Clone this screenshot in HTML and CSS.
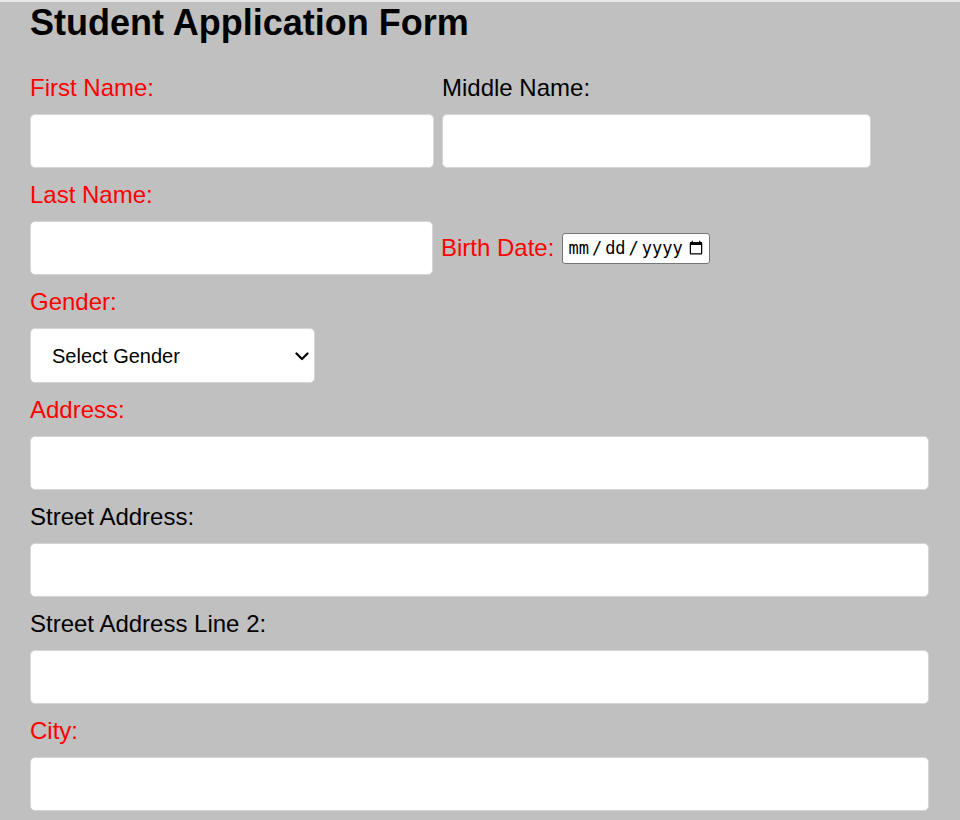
FILE: index.html
```html
<!DOCTYPE html>
<html lang="en">
<head>
<meta charset="utf-8">
<title>Student Application Form</title>
<link rel="stylesheet" href="styles.css">
</head>
<body>
<div class="strip"></div>
<form class="form">
  <h1 class="title">Student Application Form</h1>

  <div class="row">
    <div class="field field-first">
      <label class="label required" for="first">First Name:</label>
      <input class="text" id="first" type="text">
    </div>
    <div class="field field-middle">
      <label class="label" for="middle">Middle Name:</label>
      <input class="text" id="middle" type="text">
    </div>
  </div>

  <div class="field">
    <label class="label required" for="last">Last Name:</label>
    <div class="line">
      <input class="text text-last" id="last" type="text">
      <label class="label required inline" for="birth">Birth Date:</label>
      <input class="date" id="birth" type="date">
    </div>
  </div>

  <div class="field">
    <label class="label required" for="gender">Gender:</label>
    <div class="select-wrap">
      <select class="select" id="gender">
        <option>Select Gender</option>
        <option>Male</option>
        <option>Female</option>
        <option>Other</option>
      </select>
      <svg class="chevron" width="14" height="9" viewBox="0 0 14 9" aria-hidden="true">
        <path d="M1.5 1.5 L7 7 L12.5 1.5" fill="none" stroke="#000" stroke-width="2.2" stroke-linecap="round" stroke-linejoin="round"/>
      </svg>
    </div>
  </div>

  <div class="field">
    <label class="label required" for="address">Address:</label>
    <input class="text" id="address" type="text">
  </div>

  <div class="field">
    <label class="label" for="street">Street Address:</label>
    <input class="text" id="street" type="text">
  </div>

  <div class="field">
    <label class="label" for="street2">Street Address Line 2:</label>
    <input class="text" id="street2" type="text">
  </div>

  <div class="field">
    <label class="label required" for="city">City:</label>
    <input class="text" id="city" type="text">
  </div>
</form>
</body>
</html>
```

FILE: styles.css
```css
html, body {
  margin: 0;
  padding: 0;
  overflow: hidden;
}

body {
  background: #c0c0c0;
  font-family: "Liberation Sans", Arial, sans-serif;
  color: #000;
}

.strip {
  height: 2px;
  background: #e8e8e8;
}

.form {
  display: flex;
  flex-direction: column;
  padding: 0 31px 0 30px;
}

.title {
  margin: 0 0 32px;
  font-size: 36px;
  font-weight: bold;
  line-height: 41px;
}

.row {
  display: flex;
  gap: 8px;
}

.field {
  display: flex;
  flex-direction: column;
}

.field-first {
  width: 404px;
}

.field-middle {
  width: 429px;
}

.label {
  display: block;
  font-size: 24px;
  line-height: 26px;
  margin-bottom: 13px;
}

.label.required {
  color: #ff0000;
}

.label.inline {
  margin: 0;
  line-height: 28px;
}

.text {
  box-sizing: border-box;
  width: 100%;
  height: 54px;
  margin: 0 0 14px;
  padding: 12px 20px;
  border: 1px solid #d6d6d6;
  border-radius: 5px;
  background: #fff;
  font-size: 20px;
}

.line {
  display: flex;
  align-items: center;
  gap: 8px;
  margin-bottom: 14px;
}

.line .text {
  margin: 0;
}

.text-last {
  width: 403px;
  flex: none;
}

.date {
  box-sizing: border-box;
  width: 148px;
  height: 31px;
  margin: 0;
  padding: 0 5px 0 4px;
  border: 1px solid #767676;
  border-radius: 3px;
  background: #fff;
  color: #000;
  font-family: "DejaVu Sans Mono", monospace;
  font-size: 17px;
}

.date::-webkit-datetime-edit-text {
  padding: 0 2px;
}

.date::-webkit-calendar-picker-indicator {
  width: 16px;
  height: 16px;
  padding: 0;
  margin: 0 0 0 2px;
}

.select-wrap {
  position: relative;
  width: 285px;
  height: 55px;
  margin-bottom: 14px;
}

.select {
  box-sizing: border-box;
  width: 285px;
  height: 55px;
  margin: 0;
  padding: 0 36px 0 21px;
  border: 1px solid #d6d6d6;
  border-radius: 5px;
  background: #fff;
  font-family: "Liberation Sans", Arial, sans-serif;
  font-size: 20px;
  color: #000;
  appearance: none;
  -webkit-appearance: none;
}

.chevron {
  position: absolute;
  left: 265px;
  top: 24px;
  pointer-events: none;
}
```
